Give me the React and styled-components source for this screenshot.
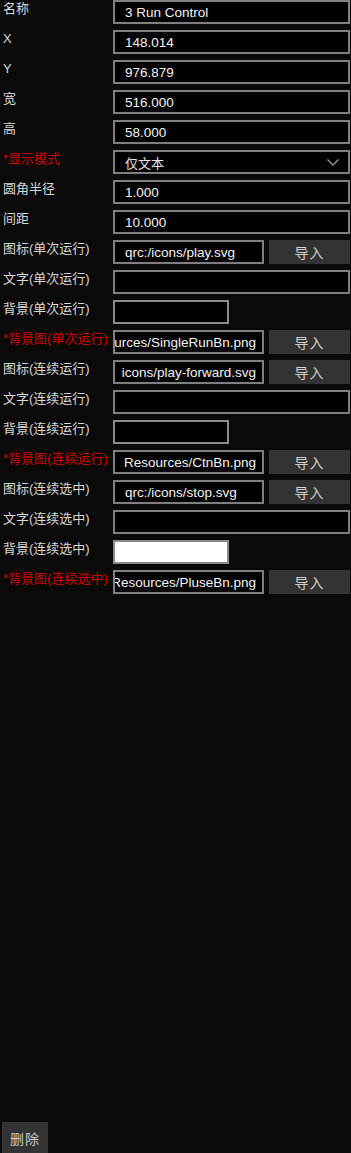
import React from "react";
import styled, { createGlobalStyle } from "styled-components";

const Global = createGlobalStyle`
  html, body {
    margin: 0;
    padding: 0;
    background: #0a0a0a;
  }
  body {
    font-family: "Liberation Sans", "Noto Sans CJK SC", sans-serif;
  }
`;

// scrolled: the line edit shows only the tail of a long path
const fields = [
  { label: "名称", kind: "text", value: "3 Run Control" },
  { label: "X", kind: "text", value: "148.014" },
  { label: "Y", kind: "text", value: "976.879" },
  { label: "宽", kind: "text", value: "516.000" },
  { label: "高", kind: "text", value: "58.000" },
  { label: "*显示模式", kind: "select", value: "仅文本", required: true },
  { label: "圆角半径", kind: "text", value: "1.000" },
  { label: "间距", kind: "text", value: "10.000" },
  { label: "图标(单次运行)", kind: "file", value: "qrc:/icons/play.svg" },
  { label: "文字(单次运行)", kind: "text", value: "" },
  { label: "背景(单次运行)", kind: "color", color: "#000" },
  { label: "*背景图(单次运行)", kind: "file", value: "urces/SingleRunBn.png", scrolled: true, required: true },
  { label: "图标(连续运行)", kind: "file", value: "icons/play-forward.svg", scrolled: true },
  { label: "文字(连续运行)", kind: "text", value: "" },
  { label: "背景(连续运行)", kind: "color", color: "#000" },
  { label: "*背景图(连续运行)", kind: "file", value: "Resources/CtnBn.png", scrolled: true, required: true },
  { label: "图标(连续选中)", kind: "file", value: "qrc:/icons/stop.svg" },
  { label: "文字(连续选中)", kind: "text", value: "" },
  { label: "背景(连续选中)", kind: "color", color: "#fff" },
  { label: "*背景图(连续选中)", kind: "file", value: "Resources/PluseBn.png", scrolled: true, required: true },
];

const Page = styled.div`
  height: 100vh;
  display: flex;
  flex-direction: column;
  justify-content: space-between;
  overflow: hidden;
`;

const Form = styled.div`
  display: flex;
  flex-direction: column;
  gap: 6px;
`;

const Row = styled.div`
  display: flex;
  height: 24px;
  padding-right: 1px;
`;

const Label = styled.div`
  width: 110px;
  padding-left: 3px;
  margin-top: -1px;
  flex-shrink: 0;
  font-family: "Liberation Sans", "Noto Sans CJK SC", sans-serif;
  font-size: 13px;
  line-height: 20px;
  white-space: nowrap;
  color: ${(p) => (p.$required ? "#d40000" : "#d8d8d8")};
`;

const Field = styled.div`
  flex: 1;
  display: flex;
  gap: 5px;
  min-width: 0;
`;

const Box = styled.div`
  flex: ${(p) => (p.$short ? "0 0 151px" : "1")};
  min-width: 0;
  box-sizing: border-box;
  height: 24px;
  border: 2px solid #808080;
  background: #000;
  display: flex;
  align-items: center;
  justify-content: ${(p) => (p.$scrolled ? "flex-end" : "flex-start")};
  padding: ${(p) => (p.$scrolled ? "0 6px 0 3px" : "0 9px 0 10px")};
  overflow: hidden;
  color: #f4f4f4;
  font-size: 13.5px;
  white-space: nowrap;
`;

const Value = styled.span`
  flex-shrink: 0;
`;

const CjkValue = styled.span`
  font-family: "Noto Sans CJK SC", sans-serif;
  font-size: 13px;
  color: #e8e8e8;
  flex: 1;
`;

const Swatch = styled.div`
  box-sizing: border-box;
  width: 116px;
  height: 24px;
  border: 2px solid #8a8a8a;
  background: ${(p) => p.$color};
`;

const ImportButton = styled.div`
  width: 81px;
  height: 24px;
  background: #333333;
  color: #d0d0d0;
  display: flex;
  align-items: center;
  justify-content: center;
  font-family: "Noto Sans CJK SC", sans-serif;
  font-size: 14px;
  letter-spacing: 1px;
  flex-shrink: 0;
`;

const DeleteButton = styled.div`
  margin-left: 2px;
  width: 46px;
  height: 31px;
  background: #333333;
  color: #c8c8c8;
  display: flex;
  align-items: center;
  justify-content: center;
  font-family: "Noto Sans CJK SC", sans-serif;
  font-size: 14px;
  letter-spacing: 1px;
`;

const Chevron = () => (
  <svg width="12" height="7" viewBox="0 0 12 7" style={{ flexShrink: 0 }}>
    <path d="M0.5 0.5 L6 6 L11.5 0.5" fill="none" stroke="#9a9a9a" strokeWidth="1.3" />
  </svg>
);

const renderField = (f) => {
  if (f.kind === "select") {
    return (
      <Box>
        <CjkValue>{f.value}</CjkValue>
        <Chevron />
      </Box>
    );
  }
  if (f.kind === "color") {
    return <Swatch $color={f.color} />;
  }
  if (f.kind === "file") {
    return (
      <>
        <Box $short $scrolled={f.scrolled}>
          <Value>{f.value}</Value>
        </Box>
        <ImportButton>导入</ImportButton>
      </>
    );
  }
  return (
    <Box>
      <Value>{f.value}</Value>
    </Box>
  );
};

export default function App() {
  return (
    <Page>
      <Global />
      <Form>
        {fields.map((f) => (
          <Row key={f.label}>
            <Label $required={f.required}>{f.label}</Label>
            <Field>{renderField(f)}</Field>
          </Row>
        ))}
      </Form>
      <DeleteButton>删除</DeleteButton>
    </Page>
  );
}
